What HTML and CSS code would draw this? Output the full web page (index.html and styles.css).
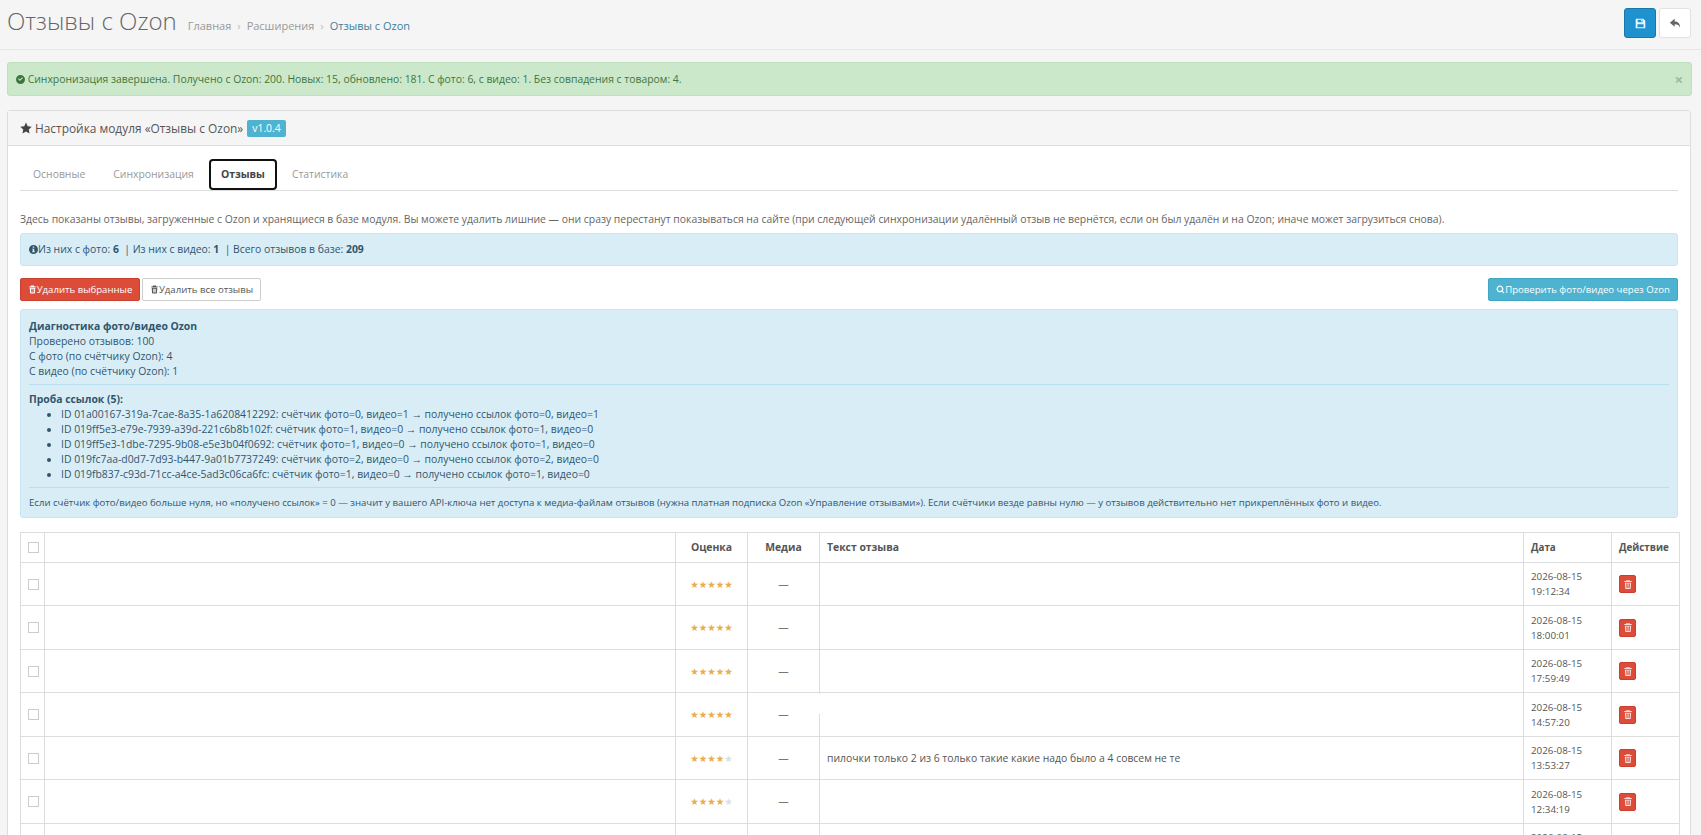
FILE: index.html
```html
<!DOCTYPE html>
<html lang="ru">
<head>
  <meta charset="UTF-8">
  <title>Отзывы с Ozon</title>
  <link rel="stylesheet" href="styles.css">
</head>
<body>

<svg class="sprite" xmlns="http://www.w3.org/2000/svg">
  <symbol id="i-save" viewBox="0 0 16 16"><path fill="currentColor" fill-rule="evenodd" d="M2 1h10l3 3v10a1 1 0 0 1-1 1H2a1 1 0 0 1-1-1V2a1 1 0 0 1 1-1zm2 1.500V6h7V2.500zm5 .5h1.500v2.200H9zM3.500 9v4.500h9V9z"/></symbol>
  <symbol id="i-reply" viewBox="0 0 16 16"><path fill="currentColor" d="M7 2 1 7l6 5V9c3.500 0 5.500.800 6.500 4.500.500-5-2-8-6.500-8z"/></symbol>
  <symbol id="i-check" viewBox="0 0 16 16"><path fill="currentColor" fill-rule="evenodd" d="M8 0a8 8 0 1 1 0 16A8 8 0 0 1 8 0zm4.300 5.200-1.300-1.300-4 4-2-2-1.300 1.300 3.300 3.400z"/></symbol>
  <symbol id="i-star" viewBox="0 0 16 16"><path fill="currentColor" d="m8 .6 2.300 4.900 5.300.7-3.900 3.700 1 5.300L8 12.600l-4.700 2.600 1-5.300L.4 6.200l5.300-.7z"/></symbol>
  <symbol id="i-info" viewBox="0 0 16 16"><path fill="currentColor" fill-rule="evenodd" d="M8 0a8 8 0 1 1 0 16A8 8 0 0 1 8 0zM6.700 2.500v2.300h2.600V2.500zM5.700 6.500V8h1v3.200h-1v1.500h4.600v-1.500h-1V6.500z"/></symbol>
  <symbol id="i-trash" viewBox="0 0 16 16"><path fill="currentColor" fill-rule="evenodd" d="M5.500 1h5l1 1.500H14V4H2V2.500h2.500zM3 5h10l-.7 9.200a1 1 0 0 1-1 .8H4.700a1 1 0 0 1-1-.8zm2.200 1.500.4 7h1.200l-.2-7zm2.200 0v7h1.200v-7zm2.200 0-.2 7h1.200l.4-7z"/></symbol>
  <symbol id="i-search" viewBox="0 0 16 16"><path fill="currentColor" fill-rule="evenodd" d="M7 1a6 6 0 0 1 4.800 9.600l3.400 3.300-1.400 1.400-3.300-3.400A6 6 0 1 1 7 1zm0 2.200a3.800 3.800 0 1 0 0 7.600 3.800 3.800 0 0 0 0-7.600z"/></symbol>
</svg>

<div class="page-header">
  <div class="title-row">
    <h1>Отзывы с Ozon</h1>
    <ul class="breadcrumb">
      <li>Главная</li>
      <li>Расширения</li>
      <li class="current">Отзывы с Ozon</li>
    </ul>
  </div>
  <div class="header-actions">
    <button class="icon-btn save"><svg><use href="#i-save"/></svg></button>
    <button class="icon-btn back"><svg><use href="#i-reply"/></svg></button>
  </div>
</div>

<div class="content">
  <div class="alert-success">
    <span><svg class="ico"><use href="#i-check"/></svg> Синхронизация завершена. Получено с Ozon: 200. Новых: 15, обновлено: 181. С фото: 6, с видео: 1. Без совпадения с товаром: 4.</span>
    <span class="close">×</span>
  </div>

  <div class="panel">
    <div class="panel-heading">
      <svg class="ico star-ico"><use href="#i-star"/></svg>
      <span class="panel-title">Настройка модуля «Отзывы с Ozon»</span>
      <span class="label">v1.0.4</span>
    </div>
    <div class="panel-body">
      <ul class="tabs">
        <li>Основные</li>
        <li>Синхронизация</li>
        <li class="active">Отзывы</li>
        <li>Статистика</li>
      </ul>

      <p class="intro">Здесь показаны отзывы, загруженные с Ozon и хранящиеся в базе модуля. Вы можете удалить лишние — они сразу перестанут показываться на сайте (при следующей синхронизации удалённый отзыв не вернётся, если он был удалён и на Ozon; иначе может загрузиться снова).</p>

      <div class="info-box summary">
        <svg class="ico"><use href="#i-info"/></svg>Из них с фото: <b>6</b> &nbsp;| Из них с видео: <b>1</b> &nbsp;| Всего отзывов в базе: <b>209</b>
      </div>

      <div class="toolbar">
        <div class="toolbar-left">
          <button class="btn btn-danger"><svg class="ico"><use href="#i-trash"/></svg>Удалить выбранные</button>
          <button class="btn btn-default"><svg class="ico"><use href="#i-trash"/></svg>Удалить все отзывы</button>
        </div>
        <button class="btn btn-info"><svg class="ico"><use href="#i-search"/></svg>Проверить фото/видео через Ozon</button>
      </div>

      <div class="info-box diagnostics">
        <div><b>Диагностика фото/видео Ozon</b></div>
        <div>Проверено отзывов: 100</div>
        <div>С фото (по счётчику Ozon): 4</div>
        <div>С видео (по счётчику Ozon): 1</div>
        <hr>
        <div><b>Проба ссылок (5):</b></div>
        <ul>
          <li>ID 01a00167-319a-7cae-8a35-1a6208412292: счётчик фото=0, видео=1 → получено ссылок фото=0, видео=1</li>
          <li>ID 019ff5e3-e79e-7939-a39d-221c6b8b102f: счётчик фото=1, видео=0 → получено ссылок фото=1, видео=0</li>
          <li>ID 019ff5e3-1dbe-7295-9b08-e5e3b04f0692: счётчик фото=1, видео=0 → получено ссылок фото=1, видео=0</li>
          <li>ID 019fc7aa-d0d7-7d93-b447-9a01b7737249: счётчик фото=2, видео=0 → получено ссылок фото=2, видео=0</li>
          <li>ID 019fb837-c93d-71cc-a4ce-5ad3c06ca6fc: счётчик фото=1, видео=0 → получено ссылок фото=1, видео=0</li>
        </ul>
        <hr>
        <div class="note">Если счётчик фото/видео больше нуля, но «получено ссылок» = 0 — значит у вашего API-ключа нет доступа к медиа-файлам отзывов (нужна платная подписка Ozon «Управление отзывами»). Если счётчики везде равны нулю — у отзывов действительно нет прикреплённых фото и видео.</div>
      </div>

      <table class="reviews">
        <colgroup>
          <col class="c-check"><col class="c-product"><col class="c-rating"><col class="c-media"><col class="c-text"><col class="c-date"><col class="c-action">
        </colgroup>
        <thead>
          <tr>
            <th><input type="checkbox"></th>
            <th></th>
            <th class="center">Оценка</th>
            <th class="center">Медиа</th>
            <th>Текст отзыва</th>
            <th class="narrow">Дата</th>
            <th class="narrow">Действие</th>
          </tr>
        </thead>
        <tbody>
          <tr>
            <td><input type="checkbox"></td><td></td>
            <td class="center stars">★★★★★</td><td class="center dash">—</td><td></td>
            <td class="date">2026-08-15<br>19:12:34</td>
            <td><button class="del-btn"><svg><use href="#i-trash"/></svg></button></td>
          </tr>
          <tr>
            <td><input type="checkbox"></td><td></td>
            <td class="center stars">★★★★★</td><td class="center dash">—</td><td></td>
            <td class="date">2026-08-15<br>18:00:01</td>
            <td><button class="del-btn"><svg><use href="#i-trash"/></svg></button></td>
          </tr>
          <tr>
            <td><input type="checkbox"></td><td></td>
            <td class="center stars">★★★★★</td><td class="center dash">—</td><td></td>
            <td class="date">2026-08-15<br>17:59:49</td>
            <td><button class="del-btn"><svg><use href="#i-trash"/></svg></button></td>
          </tr>
          <tr>
            <td><input type="checkbox"></td><td></td>
            <td class="center stars">★★★★★</td><td class="center dash">—</td><td class="border-gap"></td>
            <td class="date">2026-08-15<br>14:57:20</td>
            <td><button class="del-btn"><svg><use href="#i-trash"/></svg></button></td>
          </tr>
          <tr>
            <td><input type="checkbox"></td><td></td>
            <td class="center stars">★★★★<span class="off">★</span></td><td class="center dash">—</td><td>пилочки только 2 из 6 только такие какие надо было а 4 совсем не те</td>
            <td class="date">2026-08-15<br>13:53:27</td>
            <td><button class="del-btn"><svg><use href="#i-trash"/></svg></button></td>
          </tr>
          <tr>
            <td><input type="checkbox"></td><td></td>
            <td class="center stars">★★★★<span class="off">★</span></td><td class="center dash">—</td><td></td>
            <td class="date">2026-08-15<br>12:34:19</td>
            <td><button class="del-btn"><svg><use href="#i-trash"/></svg></button></td>
          </tr>
          <tr class="last-row">
            <td></td><td></td><td></td><td></td><td></td>
            <td class="date">2026-08-15</td>
            <td></td>
          </tr>
        </tbody>
      </table>
    </div>
  </div>
</div>

</body>
</html>
```

FILE: styles.css
```css
html, body {
  margin: 0;
  padding: 0;
  height: 835px;
  overflow: hidden;
  background-color: #f5f5f5;
  font-family: "Open Sans", sans-serif;
  font-size: 10.4px;
  line-height: 15px;
  color: #555;
}

.sprite {
  display: none;
}

.ico {
  width: 9px;
  height: 9px;
  vertical-align: -1px;
}

/* header */
.page-header {
  height: 41px;
  border-bottom: 1px solid #e6e6e6;
  padding: 8px 10px 0 7px;
  display: flex;
  justify-content: space-between;
  align-items: flex-start;
}

.title-row {
  display: flex;
  align-items: baseline;
  gap: 11px;
  margin-top: -1px;
}

h1 {
  margin: 0;
  font-size: 24px;
  line-height: 28px;
  font-weight: 300;
  color: #666;
}

.breadcrumb {
  list-style: none;
  margin: 0;
  padding: 0;
  display: flex;
  font-size: 11px;
  color: #999;
}

.breadcrumb li + li::before {
  content: "›";
  margin: 0 6px;
  color: #bbb;
}

.breadcrumb .current {
  color: #3a7f9e;
}

.header-actions {
  display: flex;
  gap: 3px;
}

.icon-btn {
  width: 32px;
  height: 30px;
  padding: 0;
  border-radius: 3px;
  display: flex;
  align-items: center;
  justify-content: center;
  cursor: pointer;
}

.icon-btn svg {
  width: 11px;
  height: 11px;
}

.icon-btn.save {
  background-color: #1e91cf;
  border: 1px solid #1978ab;
  color: #e8f6ff;
}

.icon-btn.back {
  background-color: #fff;
  border: 1px solid #e2e2e2;
  color: #666;
}

.icon-btn.back svg {
  width: 13px;
  height: 13px;
}

/* content */
.content {
  padding: 12px 10px 0 7px;
}

.alert-success {
  height: 34px;
  box-sizing: border-box;
  padding: 0 8px;
  background-color: #cce8cb;
  border: 1px solid #c0e0bd;
  border-radius: 3px;
  color: #3c763d;
  display: flex;
  justify-content: space-between;
  align-items: center;
  margin-right: -1px;
}

.alert-success .close {
  font-size: 15px;
  font-weight: 700;
  color: #9db8a0;
}

.panel {
  margin-top: 14px;
  background-color: #fff;
  border: 1px solid #ddd;
  border-radius: 3px 3px 0 0;
  height: 800px;
}

.panel-heading {
  height: 34px;
  background-color: #f5f5f5;
  border-bottom: 1px solid #ddd;
  padding-left: 12px;
  display: flex;
  align-items: center;
  font-size: 11.9px;
  color: #555;
}

.star-ico {
  width: 12px;
  height: 12px;
  margin-right: 3px;
  color: #444;
}

.label {
  margin-left: 4px;
  padding: 2px 5px;
  background-color: #4db3d0;
  color: #fff;
  border-radius: 2px;
  font-size: 10.4px;
  line-height: 13px;
}

.panel-body {
  padding: 13px 12px 0;
}

.tabs {
  list-style: none;
  margin: 0;
  padding: 0;
  height: 31px;
  border-bottom: 1px solid #ddd;
  display: flex;
  font-size: 10.4px;
  color: #999;
}

.tabs li {
  height: 31px;
  box-sizing: border-box;
  padding: 0 11px;
  margin-right: 2px;
  line-height: 27px;
  border: 2px solid transparent;
  border-radius: 3px;
}

.tabs li.active {
  border-color: #111;
  border-radius: 4px;
  font-weight: 700;
  color: #444;
  padding: 0 10px;
}

.intro {
  margin: 21px 0 6px;
  color: #666;
}

.info-box {
  background-color: #d9edf7;
  border: 1px solid #c8e5f2;
  border-radius: 3px;
  color: #31566b;
}

.summary {
  height: 33px;
  box-sizing: border-box;
  padding: 0 8px;
  line-height: 31px;
}

.toolbar {
  margin-top: 12px;
  height: 23px;
  display: flex;
  justify-content: space-between;
}

.toolbar-left {
  display: flex;
  gap: 2px;
}

.btn {
  height: 23px;
  padding: 0 6px;
  border-radius: 2px;
  font-family: inherit;
  font-size: 9.6px;
  line-height: 21px;
  cursor: pointer;
  white-space: nowrap;
}

.btn-danger {
  width: 120px;
  background-color: #dd4b39;
  border: 1px solid #c9402f;
  color: #fff;
}

.btn-default {
  width: 119px;
  background-color: #fff;
  border: 1px solid #ccc;
  color: #555;
}

.btn-info {
  width: 190px;
  background-color: #4db3d0;
  border: 1px solid #40a6c4;
  color: #fff;
}

.diagnostics {
  margin-top: 8px;
  height: 209px;
  box-sizing: border-box;
  padding: 9px 8px 0;
}

.diagnostics hr {
  border: 0;
  border-top: 1px solid #b9def0;
  margin: 5px 0 7px;
}

.diagnostics ul {
  margin: 0;
  padding-left: 32px;
}

.note {
  font-size: 9.6px;
}

.reviews {
  margin-top: 14px;
  width: 1659px;
  border-collapse: collapse;
  table-layout: fixed;
  background-color: #fff;
}

.c-check { width: 24px; }
.c-product { width: 631px; }
.c-rating { width: 72px; }
.c-media { width: 72px; }
.c-text { width: 704px; }
.c-date { width: 88px; }
.c-action { width: 68px; }

.reviews th, .reviews td {
  border: 1px solid #ddd;
  padding: 0 7px;
  text-align: left;
  vertical-align: middle;
  position: relative;
}

.reviews thead tr {
  height: 30px;
}

.reviews tbody tr {
  height: 44px;
}

.reviews tbody tr:nth-child(odd) {
  height: 43px;
}

.reviews th {
  font-weight: 700;
  color: #555;
}

.reviews .narrow {
  font-size: 9.8px;
}

.reviews .center {
  text-align: center;
}

.reviews .dash {
  color: #777;
}

.reviews .date {
  font-size: 9.8px;
}

.reviews .last-row .date {
  vertical-align: top;
  padding-top: 6px;
}

.reviews input[type="checkbox"] {
  appearance: none;
  display: block;
  width: 11px;
  height: 11px;
  margin: 0;
  background-color: #fff;
  border: 1px solid #ccc;
}

.stars {
  font-family: "DejaVu Sans", sans-serif;
  font-size: 9.5px;
  color: #e8ae4a;
}

.stars .off {
  color: #d8dfe6;
}

.del-btn {
  width: 17px;
  height: 18px;
  padding: 0;
  background-color: #dd4b39;
  border: 1px solid #c9402f;
  border-radius: 2px;
  color: #fbdcd8;
  display: flex;
  align-items: center;
  justify-content: center;
  cursor: pointer;
}

.del-btn svg {
  width: 10px;
  height: 11px;
}

/* white cut in the column rule on the fourth row */
.border-gap::before {
  content: "";
  position: absolute;
  left: -1px;
  top: 1px;
  width: 1px;
  height: 20px;
  background-color: #fff;
}
```
